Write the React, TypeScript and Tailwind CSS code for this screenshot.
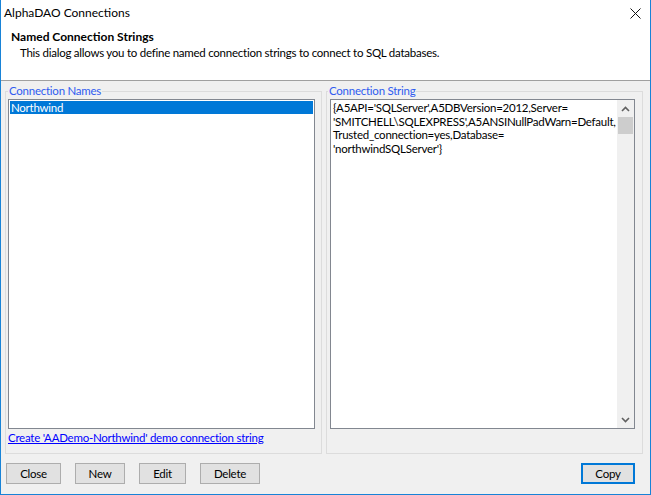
import React from "react";

const lines = [
  "{A5API='SQLServer',A5DBVersion=2012,Server=",
  "'SMITCHELL\\SQLEXPRESS',A5ANSINullPadWarn=Default,",
  "Trusted_connection=yes,Database=",
  "'northwindSQLServer'}",
];

function Chevron({ up }: { up?: boolean }) {
  return (
    <svg width="9" height="6" viewBox="0 0 9 6">
      <path
        d={up ? "M1 5 L4.5 1.5 L8 5" : "M1 1 L4.5 4.5 L8 1"}
        fill="none"
        stroke="#606060"
        strokeWidth="1.6"
      />
    </svg>
  );
}

function Button({ label, w, focused }: { label: string; w: string; focused?: boolean }) {
  return (
    <button
      className={`${w} h-[21px] shrink-0 flex items-center justify-center bg-[#e1e1e1] text-black ${
        focused ? "border-2 border-[#0078d7]" : "border border-[#adadad]"
      }`}
    >
      {label}
    </button>
  );
}

export default function App() {
  return (
    <div className="w-[651px] h-[495px] flex flex-col bg-[#f0f0f0] border-x border-b border-[#1883d7] font-['Lato','Noto_Sans',sans-serif] text-[11.5px] tracking-[-0.25px] text-black overflow-hidden">
      {/* Title bar */}
      <div className="h-[26px] shrink-0 bg-white flex items-center justify-between pl-[3px] pr-[9px]">
        <span className="text-[12px] tracking-normal">AlphaDAO Connections</span>
        <svg width="11" height="11" viewBox="0 0 11 11">
          <path d="M0.5 0.5 L10.5 10.5 M10.5 0.5 L0.5 10.5" stroke="#111" strokeWidth="1" />
        </svg>
      </div>

      {/* Header */}
      <div className="h-[55px] shrink-0 bg-white border-b border-[#a0a0a0] pl-[10px] pt-[3px] leading-[16px]">
        <div className="font-bold text-[12px] tracking-normal">Named Connection Strings</div>
        <div className="pl-[9px]">
          This dialog allows you to define named connection strings to connect to SQL databases.
        </div>
      </div>

      {/* Body */}
      <div className="flex shrink-0 gap-[4px] pl-[4px] pt-[2px]">
        <fieldset className="w-[317px] min-w-0 shrink-0 border border-[#dcdcdc] pl-[2px] pr-[6px] pb-[7px]">
          <legend className="px-[1px] leading-[16px] text-[#2f5cf0]">Connection Names</legend>
          <div className="h-[330px] bg-white border border-[#828790] p-[1px]">
            <div className="h-[13px] bg-[#0078d7] text-white pl-[1px] leading-[13px]">Northwind</div>
          </div>
          <a
            className="block mt-[1px] leading-[16px] whitespace-nowrap text-[#0000ff] underline underline-offset-[1px]"
            href="#"
          >
            Create 'AADemo-Northwind' demo connection string
          </a>
        </fieldset>

        <fieldset className="w-[317px] min-w-0 shrink-0 border border-[#dcdcdc] pl-[3px] pr-[7px] pb-[24px]">
          <legend className="ml-[-2px] px-[1px] leading-[16px] text-[#2f5cf0]">Connection String</legend>
          <div className="h-[330px] bg-white border border-[#828790] flex">
            <div className="flex-1 min-w-0 pl-[2px] pt-[1px] leading-[13.7px] whitespace-nowrap overflow-hidden">
              {lines.map((l) => (
                <div key={l}>{l}</div>
              ))}
            </div>
            <div className="w-[17px] shrink-0 bg-[#f0f0f0] flex flex-col items-center">
              <div className="h-[17px] flex items-center justify-center">
                <Chevron up />
              </div>
              <div className="w-[15px] h-[17px] bg-[#cdcdcd]" />
              <div className="flex-1" />
              <div className="h-[17px] flex items-center justify-center">
                <Chevron />
              </div>
            </div>
          </div>
        </fieldset>
      </div>

      {/* Buttons */}
      <div className="flex shrink-0 items-center pl-[5px] pr-[15px] mt-[9px]">
        <div className="flex gap-[14px]">
          <Button label="Close" w="w-[55px]" />
          <Button label="New" w="w-[50px]" />
          <Button label="Edit" w="w-[47px]" />
          <Button label="Delete" w="w-[60px]" />
        </div>
        <div className="flex-1" />
        <Button label="Copy" w="w-[54px]" focused />
      </div>
    </div>
  );
}
